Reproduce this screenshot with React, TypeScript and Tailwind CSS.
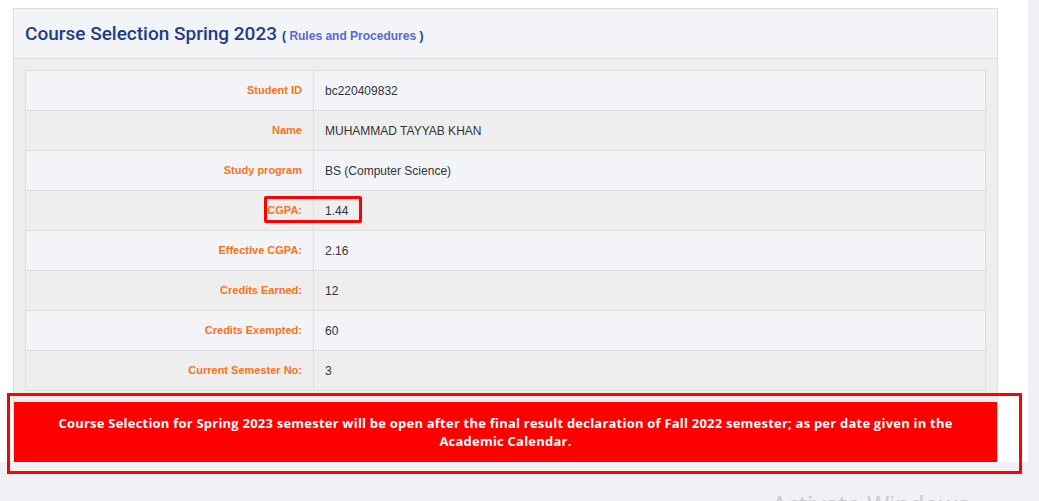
const rows = [
  { label: "Student ID", value: "bc220409832" },
  { label: "Name", value: "MUHAMMAD TAYYAB KHAN" },
  { label: "Study program", value: "BS (Computer Science)" },
  { label: "CGPA:", value: "1.44" },
  { label: "Effective CGPA:", value: "2.16" },
  { label: "Credits Earned:", value: "12" },
  { label: "Credits Exempted:", value: "60" },
  { label: "Current Semester No:", value: "3" },
];

export default function App() {
  return (
    <div className="relative h-[501px] overflow-hidden bg-[#f0f1f7] font-['Liberation_Sans',Arial,sans-serif]">
      <div className="w-[1028px] h-[462px] bg-white pt-2 pl-[13px]">
        <div className="w-[985px] border-x border-t border-[#dddddd]">
          {/* Header */}
          <div className="h-[50px] bg-[#f3f4f8] border-b border-[#dddddd] flex items-center pl-[11px]">
            <h1 className="text-[19px] font-medium text-[#1f3c86] leading-none font-['Roboto',sans-serif]">
              Course Selection Spring 2023
            </h1>
            <span className="ml-[5px] mt-[4px] text-[12px] font-bold text-[#213f88]">
              ( <span className="text-[#5668cf]">Rules and Procedures</span> )
            </span>
          </div>

          {/* Student info */}
          <div className="bg-[#eeeeee] p-[11px]">
            <div className="border border-[#dddddd] text-[12px]">
              {rows.map((r, i) => (
                <div
                  key={r.label}
                  className={`flex ${i === 0 ? "h-[39px]" : "h-[40px] border-t border-[#dddddd]"} ${
                    i % 2 === 0 ? "bg-[#f3f4f8]" : "bg-[#eeeeee]"
                  }`}
                >
                  <div className="w-[287px] flex items-center justify-end pr-[11px] text-[11px] font-bold text-[#f7731c]">
                    {r.label}
                  </div>
                  <div className="flex-1 flex items-center border-l border-[#dddddd] pl-[11px] text-[#333333]">
                    {r.value}
                  </div>
                </div>
              ))}
            </div>
          </div>

          {/* Notice */}
          <div className="h-[60px] bg-[#ff0000] pt-[12px] text-center text-white text-[13px] leading-[18px] font-bold tracking-[0.22px] font-['Open_Sans',sans-serif]">
            Course Selection for Spring 2023 semester will be open after the final result declaration of Fall 2022 semester; as per date given in the
            <br />
            Academic Calendar.
          </div>
        </div>
      </div>

      {/* annotation boxes */}
      <div className="absolute left-[264px] top-[196px] w-[98px] h-[27px] border-[3px] border-[#ff0000] rounded-[2px]" />
      <div className="absolute left-[7px] top-[393px] w-[1015px] h-[81px] border-[3px] border-[#ff0000]" />

      <div className="absolute left-[772px] top-[492px] text-[24px] text-[#c9c9cc] font-['Open_Sans',sans-serif] leading-none">
        Activate Windows
      </div>
    </div>
  );
}
